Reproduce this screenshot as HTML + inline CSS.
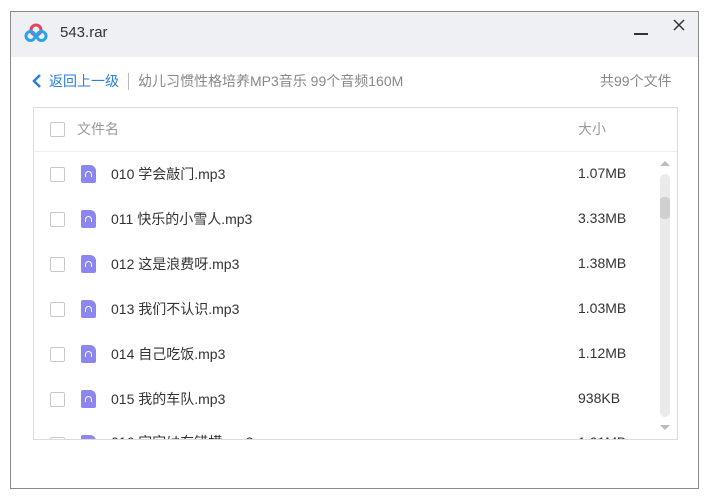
<!DOCTYPE html>
<html><head><meta charset="utf-8"><style>
*{margin:0;padding:0;box-sizing:border-box}
body{width:709px;height:498px;background:#fff;font-family:"Liberation Sans","Noto Sans CJK SC",sans-serif;position:relative;overflow:hidden;color:#333}
.win{position:absolute;left:10px;top:11px;width:689px;height:478px;border:1px solid #8a8a8a;background:#fff}
.title{position:absolute;left:0;top:0;right:0;height:45px;background:#eef0f4}
.t{position:absolute;font-size:14px;white-space:nowrap;line-height:20px}
.panel{position:absolute;left:22px;top:95px;width:645px;height:333px;border:1px solid #dcdcdc;overflow:hidden;background:#fff}
.cb{position:absolute;width:15px;height:15px;border:1px solid #c8c8c8;border-radius:2px;background:#fff}
.ic{position:absolute;width:15px;height:18px;background:#8b86f0;border-radius:2px 6px 2px 2px}
.ic:after{content:"";position:absolute;left:4px;top:6px;width:5px;height:5px;border:1.5px solid #fff;border-bottom:none;border-radius:4px 4px 0 0}
</style></head><body>
<div class="win">
<div class="title">
<svg style="position:absolute;left:13px;top:11px" width="24" height="20" viewBox="0 0 24 20"><circle cx="12" cy="7" r="5" fill="none" stroke="#e4435a" stroke-width="3"/><circle cx="6.5" cy="13" r="4.5" fill="none" stroke="#2aa3ef" stroke-width="3"/><circle cx="17.5" cy="13" r="4.5" fill="none" stroke="#2aa3ef" stroke-width="3"/></svg>
<div class="t" style="left:49px;top:11px;font-size:15px;color:#333">543.rar</div>
<div style="position:absolute;left:623px;top:21px;width:14px;height:1.5px;background:#333"></div>
<svg style="position:absolute;left:661px;top:6px" width="14" height="14"><path d="M2 2L12 12M12 2L2 12" stroke="#333" stroke-width="1.5"/></svg>
</div>
<svg style="position:absolute;left:21px;top:62px" width="10" height="14"><path d="M8 1L2 7l6 6" fill="none" stroke="#2a7de1" stroke-width="2.5"/></svg>
<div class="t" style="left:38px;top:59px;color:#2a7de1">返回上一级</div>
<div style="position:absolute;left:117px;top:61px;width:1px;height:17px;background:#bbb"></div>
<div class="t" style="left:127px;top:59px;color:#888">幼儿习惯性格培养MP3音乐 99个音频160M</div>
<div class="t" style="left:589px;top:59px;color:#888">共99个文件</div>
<div class="panel">
<div class="cb" style="left:16px;top:14px"></div>
<div class="t" style="left:43px;top:11px;color:#999">文件名</div>
<div class="t" style="left:544px;top:11px;color:#999">大小</div>
<div style="position:absolute;left:0;right:0;top:43px;height:1px;background:#eee"></div>
<div class="cb" style="left:16px;top:59px"></div><div class="ic" style="left:47px;top:57px"></div><div class="t" style="left:77px;top:56px">010 学会敲门.mp3</div><div class="t" style="left:544px;top:55px">1.07MB</div>
<div class="cb" style="left:16px;top:104px"></div><div class="ic" style="left:47px;top:102px"></div><div class="t" style="left:77px;top:101px">011 快乐的小雪人.mp3</div><div class="t" style="left:544px;top:100px">3.33MB</div>
<div class="cb" style="left:16px;top:149px"></div><div class="ic" style="left:47px;top:147px"></div><div class="t" style="left:77px;top:146px">012 这是浪费呀.mp3</div><div class="t" style="left:544px;top:145px">1.38MB</div>
<div class="cb" style="left:16px;top:194px"></div><div class="ic" style="left:47px;top:192px"></div><div class="t" style="left:77px;top:191px">013 我们不认识.mp3</div><div class="t" style="left:544px;top:190px">1.03MB</div>
<div class="cb" style="left:16px;top:239px"></div><div class="ic" style="left:47px;top:237px"></div><div class="t" style="left:77px;top:236px">014 自己吃饭.mp3</div><div class="t" style="left:544px;top:235px">1.12MB</div>
<div class="cb" style="left:16px;top:284px"></div><div class="ic" style="left:47px;top:282px"></div><div class="t" style="left:77px;top:281px">015 我的车队.mp3</div><div class="t" style="left:544px;top:280px">938KB</div>
<div class="cb" style="left:16px;top:329px"></div><div class="ic" style="left:47px;top:327px"></div><div class="t" style="left:77px;top:324px">016 宝宝は东错横.mp3</div><div class="t" style="left:544px;top:324px">1.01MB</div>
<div style="position:absolute;left:626px;top:53px;width:0;height:0;border-left:5px solid transparent;border-right:5px solid transparent;border-bottom:5px solid #bbb"></div>
<div style="position:absolute;left:626px;top:66px;width:10px;height:243px;background:#eaeaea;border-radius:5px"></div>
<div style="position:absolute;left:626px;top:89px;width:10px;height:22px;background:#d0d0d0;border-radius:4px"></div>
<div style="position:absolute;left:626px;top:317px;width:0;height:0;border-left:5px solid transparent;border-right:5px solid transparent;border-top:5px solid #bbb"></div>
</div>
</div>
</body></html>
